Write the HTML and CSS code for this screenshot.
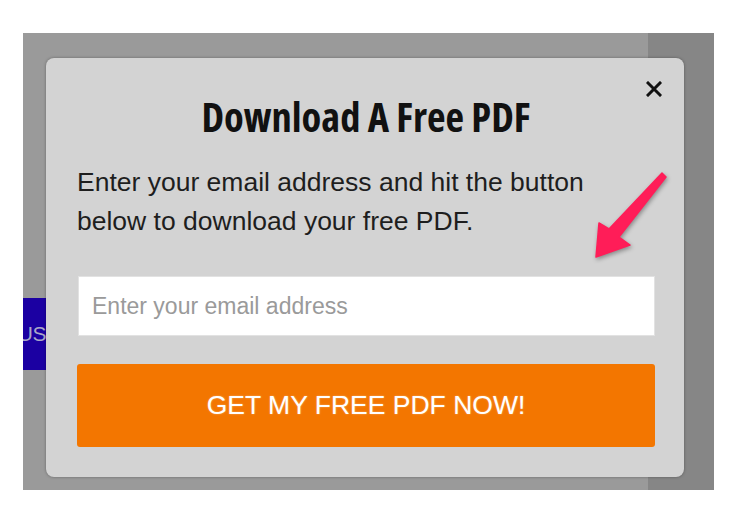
FILE: index.html
```html
<!DOCTYPE html>
<html>
<head>
<meta charset="utf-8">
<link rel="stylesheet" href="styles.css">
</head>
<body>
<div class="backdrop">
  <div class="side-tab">US</div>
  <div class="modal">
    <button class="close" aria-label="Close">
      <svg width="16" height="16" viewBox="0 0 16 16"><path d="M2 2 L14 14 M14 2 L2 14" stroke="#111" stroke-width="3" stroke-linecap="square" fill="none"/></svg>
    </button>
    <h1 class="title">Download A Free PDF</h1>
    <p class="lead">Enter your email address and hit the button below to download your free PDF.</p>
    <input class="email" type="text" placeholder="Enter your email address">
    <button class="cta">GET MY FREE PDF NOW!</button>
    <svg class="arrow" width="90" height="100" viewBox="0 0 90 100"><polygon points="72,5 76,9 29,69 40,77 6,89 9,55 19,61" fill="#ff1d58" stroke="#ff1d58" stroke-width="1.5" stroke-linejoin="round"/></svg>
  </div>
</div>
</body>
</html>
```
FILE: styles.css
```css
html, body {
  margin: 0;
  padding: 0;
  background: #ffffff;
}
.backdrop {
  position: relative;
  overflow: hidden;
  margin: 33px 0 0 23px;
  width: 691px;
  height: 457px;
  padding: 25px 0 0 23px;
  box-sizing: border-box;
  background: linear-gradient(to right, #9a9a9a 0, #9a9a9a 625px, #868686 625px, #868686 100%);
}
.side-tab {
  position: absolute;
  left: -40px;
  top: 265px;
  width: 63px;
  height: 72px;
  background: #1b00a2;
  color: #a9a6c8;
  font-family: "Liberation Sans", Arial, sans-serif;
  font-size: 21px;
  line-height: 72px;
  text-align: right;
  box-sizing: border-box;
  padding-right: 0;
  letter-spacing: -0.5px;
}
.modal {
  position: relative;
  width: 638px;
  height: 419px;
  box-sizing: border-box;
  padding: 31px 29px 0 31px;
  background: #d3d3d3;
  border-radius: 8px;
  box-shadow: 0 0 3px rgba(0,0,0,0.35);
  display: flex;
  flex-direction: column;
}
.close {
  position: absolute;
  right: 21px;
  top: 22px;
  width: 18px;
  height: 18px;
  padding: 1px;
  margin: 0;
  border: 0;
  background: transparent;
  display: flex;
}
.title {
  margin: 0;
  font-family: "Open Sans", "DejaVu Sans Condensed", sans-serif;
  font-stretch: 75%;
  font-weight: 700;
  font-size: 40.5px;
  line-height: 56px;
  text-align: center;
  color: #111;
}
.lead {
  margin: 18px 0 0 0;
  max-width: 545px;
  font-family: "Liberation Sans", Arial, sans-serif;
  font-size: 26.5px;
  line-height: 39px;
  color: #1e1e1e;
}
.email {
  margin: 35px 0 0 1px;
  height: 60px;
  box-sizing: border-box;
  border: 1px solid #e2e2e2;
  background: #fff;
  padding: 0 13px;
  font-family: "Liberation Sans", Arial, sans-serif;
  font-size: 23px;
  color: #333;
  outline: none;
}
.email::placeholder {
  color: #9a9a9a;
}
.cta {
  margin: 28px 0 0 0;
  height: 83px;
  border: 0;
  border-radius: 3px;
  background: #f37600;
  color: #fff;
  font-family: "Liberation Sans", Arial, sans-serif;
  font-size: 26.5px;
  padding: 0;
  text-shadow: 0 0 2px rgba(255,255,255,0.4);
}
.arrow {
  position: absolute;
  left: 544px;
  top: 110px;
  filter: drop-shadow(1px 2px 2px rgba(0,0,0,0.35));
}
```
